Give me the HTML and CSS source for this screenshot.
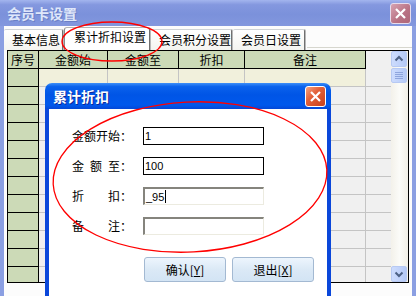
FILE: index.html
```html
<!DOCTYPE html>
<html lang="zh">
<head>
<meta charset="utf-8">
<title>会员卡设置</title>
<link rel="stylesheet" href="styles.css">
</head>
<body>
<div class="win">
  <div class="titlebar">
    <span class="title">会员卡设置</span>
    <span class="xbtn inactive"><svg width="13" height="13" viewBox="0 0 13 13"><path d="M2 2 L11 11 M11 2 L2 11" stroke="#fff" stroke-width="2.2" fill="none"/></svg></span>
  </div>
  <div class="client">
    <div class="tabs">
      <div class="tab t1">基本信息</div>
      <div class="tab sel">累计折扣设置</div>
      <div class="tab t3">会员积分设置</div>
      <div class="tab t4">会员日设置</div>
      <div class="tabfill"></div>
    </div>
    <div class="grid">
      <div class="table">
        <div class="r hd"><div>序号</div><div>金额始</div><div>金额至</div><div>折扣</div><div>备注</div><div></div></div>
        <div class="r cur"><div></div><div></div><div></div><div></div><div></div><div></div></div>
        <div class="r"><div></div><div></div><div></div><div></div><div></div><div></div></div>
        <div class="r"><div></div><div></div><div></div><div></div><div></div><div></div></div>
        <div class="r"><div></div><div></div><div></div><div></div><div></div><div></div></div>
        <div class="r"><div></div><div></div><div></div><div></div><div></div><div></div></div>
        <div class="r"><div></div><div></div><div></div><div></div><div></div><div></div></div>
        <div class="r"><div></div><div></div><div></div><div></div><div></div><div></div></div>
        <div class="r"><div></div><div></div><div></div><div></div><div></div><div></div></div>
        <div class="r"><div></div><div></div><div></div><div></div><div></div><div></div></div>
        <div class="r"><div></div><div></div><div></div><div></div><div></div><div></div></div>
        <div class="r"><div></div><div></div><div></div><div></div><div></div><div></div></div>
        <div class="r"><div></div><div></div><div></div><div></div><div></div><div></div></div>
      </div>
      <div class="vscroll">
        <div class="sbtn"><svg width="14" height="14" viewBox="0 0 14 14"><path d="M3.5 8.5 L7 5 L10.5 8.5" stroke="#4d6185" stroke-width="2" fill="none"/></svg></div>
        <div class="thumb"><svg width="8" height="8" viewBox="0 0 8 8"><path d="M0 0.5 H8 M0 2.5 H8 M0 4.5 H8 M0 6.5 H8" stroke="#8ea5dd" stroke-width="1"/></svg></div>
        <div class="track"></div>
        <div class="sbtn"><svg width="14" height="14" viewBox="0 0 14 14"><path d="M3.5 5.5 L7 9 L10.5 5.5" stroke="#4d6185" stroke-width="2" fill="none"/></svg></div>
      </div>
    </div>
  </div>
</div>

<div class="dialog">
  <div class="dlg-title">
    <span class="dtitle">累计折扣</span>
    <span class="xbtn active"><svg width="13" height="13" viewBox="0 0 13 13"><path d="M2 2 L11 11 M11 2 L2 11" stroke="#fff" stroke-width="2.2" fill="none"/></svg></span>
  </div>
  <div class="dlg-body">
    <div class="frow"><span class="lbl">金额开始</span><span class="colon">：</span><div class="field flat">1</div></div>
    <div class="frow"><span class="lbl">金额至</span><span class="colon">：</span><div class="field flat">100</div></div>
    <div class="frow"><span class="lbl">折扣</span><span class="colon">：</span><div class="field sunk">_95<span class="caret"></span></div></div>
    <div class="frow"><span class="lbl">备注</span><span class="colon">：</span><div class="field sunk"></div></div>
    <div class="btns">
      <button class="btn">确认[<u>Y</u>]</button>
      <button class="btn">退出[<u>X</u>]</button>
    </div>
  </div>
</div>

<svg class="marks" width="416" height="296" viewBox="0 0 416 296">
  <ellipse cx="112" cy="41.5" rx="50" ry="19.5"/>
  <ellipse cx="190" cy="177" rx="137" ry="75" transform="rotate(-3 190 177)"/>
</svg>
</body>
</html>
```

FILE: styles.css
```css
* { box-sizing: border-box; margin: 0; padding: 0; }
html, body { width: 416px; height: 296px; overflow: hidden; }
body {
  position: relative;
  font-family: "Noto Sans CJK SC", "Noto Sans", sans-serif;
  font-size: 12px;
  line-height: 1;
  color: #000;
  background: #8b9fe2;
}

.win {
  width: 416px;
  height: 296px;
  display: flex;
  flex-direction: column;
  background: #8b9fe2;
}
.titlebar {
  height: 26px;
  flex: none;
  display: flex;
  align-items: center;
  justify-content: space-between;
  padding: 0 5px 0 7px;
  background: linear-gradient(#a3b5ee, #8498df 18%, #7b91db 55%, #8397de);
}
.title {
  font-size: 14px;
  font-weight: bold;
  color: #dfe7fa;
  text-shadow: 1px 1px 0 #6b7fc6;
}
.xbtn {
  width: 21px;
  height: 21px;
  border-radius: 3px;
  border: 1px solid #fff;
  display: flex;
  align-items: center;
  justify-content: center;
}
.xbtn.inactive {
  background: linear-gradient(135deg, #d7a3b1, #b87183 60%, #ae6779);
  border-color: #e6dcec;
}
.xbtn.active {
  background: linear-gradient(135deg, #f4a381, #e3613a 40%, #c8401b);
}

.client {
  flex: 1;
  margin: 0 4px;
  background: #fcfcfc;
  display: flex;
  flex-direction: column;
  padding-top: 1px;
}
.tabs {
  height: 23px;
  flex: none;
  display: flex;
  align-items: flex-end;
}
.tab {
  flex: none;
  height: 21px;
  display: flex;
  align-items: center;
  white-space: nowrap;
  padding-left: 8px;
  padding-bottom: 1px;
  background: linear-gradient(#ffffff, #f4f4f0);
  border-top: 1px solid #cfd3d6;
  border-right: 1px solid #707070;
  box-shadow: 1px 0 0 #b8b8b8;
  border-radius: 2px 2px 0 0;
}
.t1 { width: 59px; }
.sel {
  width: 86px;
  height: 23px;
  padding-left: 9px;
  padding-bottom: 4px;
  margin-left: 1px;
  background: #ffffff;
  border-left: 1px solid #8a8a8a;
  border-top: 1px solid #b5b5b5;
  border-radius: 3px 3px 0 0;
}
.t3 { width: 81px; margin-left: 1px; }
.t4 { width: 72px; margin-left: 1px; }
.tabfill {
  flex: 1;
  align-self: flex-start;
  height: 21px;
  margin-left: 2px;
  border-bottom: 1px solid #d6d6ce;
}

.grid {
  margin: 0 3px;
  height: 233px;
  flex: none;
  border: 1px solid #000;
  display: flex;
  background: #f0f0f0;
}
.table {
  width: 383px;
  flex: none;
  overflow: hidden;
}
.r {
  display: grid;
  grid-template-columns: 31px 69px 71px 66px 121px 25px;
  height: 18px;
}
.r > div {
  border-right: 1px solid #c4c4c4;
  border-bottom: 1px solid #c4c4c4;
  background: #f0f0f0;
}
.r > div:first-child {
  background: #ccdab7;
  border-color: #000;
}
.r > div:last-child { border-right: 0; }
.r.cur > div:nth-child(n+2):nth-child(-n+5) { background: #f1f0dc; }
.r.hd > div {
  background: #ccdab7;
  border-color: #000;
  display: flex;
  align-items: center;
  justify-content: center;
  line-height: 16px;
}
.r.hd > div:last-child {
  background: #f0f0f0;
  border: 0;
}

.vscroll {
  width: 17px;
  flex: none;
  display: flex;
  flex-direction: column;
  padding-right: 1px;
  background: linear-gradient(90deg, #f3f1ea, #fbfbf8 50%, #f1efe6);
}
.sbtn, .thumb {
  height: 16px;
  border: 1px solid #b7c9f3;
  border-radius: 2px;
  background: linear-gradient(90deg, #cddcfd, #bfd1fa 60%, #b3c8f6);
  display: flex;
  align-items: center;
  justify-content: center;
}
.thumb {
  margin-top: 1px;
  height: 15px;
}
.track { flex: 1; }

.dialog {
  position: absolute;
  left: 45px;
  top: 83px;
  width: 286px;
  height: 213px;
  display: flex;
  flex-direction: column;
}
.dlg-title {
  height: 26px;
  flex: none;
  border-radius: 7px 7px 0 0;
  background: linear-gradient(#3d8ff9, #0a62ec 14%, #0055e6 45%, #0058ec 85%, #0447d6);
  display: flex;
  align-items: center;
  justify-content: space-between;
  padding: 0 5px 0 8px;
}
.dtitle {
  font-size: 14px;
  font-weight: bold;
  color: #fff;
  text-shadow: 1px 1px 0 #0a2a9a;
}
.dlg-body {
  flex: 1;
  background: #fff;
  border-left: 4px solid #0a47da;
  border-right: 4px solid #0a47da;
  padding-top: 18px;
  display: flex;
  flex-direction: column;
  gap: 12px;
}
.frow {
  display: flex;
  align-items: center;
  height: 18px;
  padding-left: 23px;
}
.lbl {
  width: 48px;
  text-align: justify;
  text-align-last: justify;
}
.colon { width: 12px; }
.field {
  margin-left: 11px;
  width: 121px;
  height: 18px;
  font-family: "Liberation Sans", sans-serif;
  font-size: 11px;
  line-height: 16px;
  padding-left: 1px;
  display: flex;
  align-items: center;
}
.flat { border: 1px solid #000; }
.sunk {
  border-top: 2px solid #85847d;
  border-left: 2px solid #85847d;
  border-right: 1px solid #ecebe0;
  border-bottom: 1px solid #ecebe0;
}
.caret {
  width: 1px;
  height: 13px;
  background: #000;
  margin-left: 1px;
}
.btns {
  display: flex;
  gap: 6px;
  padding-left: 95px;
  margin-top: 10px;
}
.btn {
  width: 82px;
  height: 25px;
  border: 1px solid #a3b9d2;
  border-radius: 3px;
  background: linear-gradient(#edf5fd, #dbe9f6 50%, #d3e4f4);
  font-family: "Noto Sans CJK SC", "Noto Sans", sans-serif;
  font-size: 12px;
  color: #000;
}

.marks {
  position: absolute;
  left: 0;
  top: 0;
  pointer-events: none;
}
.marks ellipse {
  fill: none;
  stroke: #ff0000;
  stroke-width: 1.3;
}
```
